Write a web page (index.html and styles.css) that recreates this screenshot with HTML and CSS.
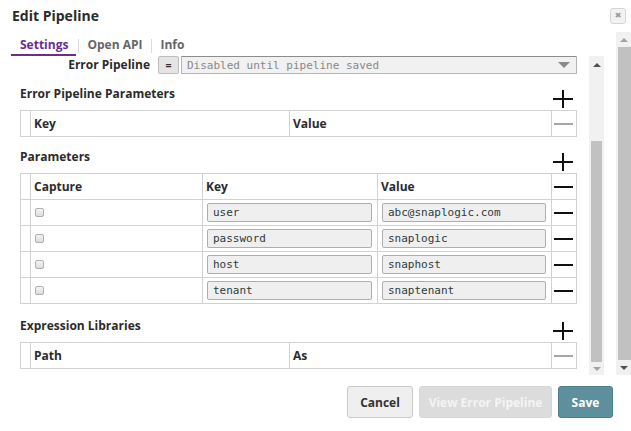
FILE: index.html
```html
<!DOCTYPE html>
<html lang="en">
<head>
<meta charset="utf-8">
<title>Edit Pipeline</title>
<link rel="stylesheet" href="styles.css">
</head>
<body>
<div class="dialog">
  <header class="dlg-head">
    <h1 class="dlg-title">Edit Pipeline</h1>
    <button class="dlg-close" type="button" aria-label="Close">&#x2716;</button>
  </header>

  <div class="dlg-main">
    <div class="dlg-left">
      <nav class="tabs">
        <span class="tab active">Settings</span>
        <span class="tab-sep"></span>
        <span class="tab">Open API</span>
        <span class="tab-sep"></span>
        <span class="tab">Info</span>
      </nav>

      <div class="pane">
        <div class="pane-content">
          <div class="field-row">
            <label class="field-label">Error Pipeline</label>
            <button class="expr-btn" type="button">=</button>
            <div class="select">
              <span class="select-text">Disabled until pipeline saved</span>
              <span class="select-caret"></span>
            </div>
          </div>

          <section class="group">
            <div class="group-head">
              <h2 class="group-title">Error Pipeline Parameters</h2>
              <svg class="icon-plus" width="20" height="18" viewBox="0 0 20 18"><path d="M10 0v18M0 9h20" stroke="#111" stroke-width="2" fill="none"/></svg>
            </div>
            <table class="grid">
              <colgroup><col class="c-idx"><col style="width:259px"><col style="width:262px"><col class="c-act"></colgroup>
              <tr class="head">
                <th></th><th>Key</th><th>Value</th>
                <th class="act"><span class="minus off"></span></th>
              </tr>
            </table>
          </section>

          <section class="group">
            <div class="group-head">
              <h2 class="group-title">Parameters</h2>
              <svg class="icon-plus" width="20" height="18" viewBox="0 0 20 18"><path d="M10 0v18M0 9h20" stroke="#111" stroke-width="2" fill="none"/></svg>
            </div>
            <table class="grid">
              <colgroup><col class="c-idx"><col style="width:172px"><col style="width:175px"><col style="width:174px"><col class="c-act"></colgroup>
              <tr class="head">
                <th></th><th>Capture</th><th>Key</th><th>Value</th>
                <th class="act"><span class="minus"></span></th>
              </tr>
              <tr>
                <td></td><td><span class="check"></span></td>
                <td class="in"><span class="input">user</span></td>
                <td class="in"><span class="input">abc@snaplogic.com</span></td>
                <td class="act"><span class="minus"></span></td>
              </tr>
              <tr>
                <td></td><td><span class="check"></span></td>
                <td class="in"><span class="input">password</span></td>
                <td class="in"><span class="input">snaplogic</span></td>
                <td class="act"><span class="minus"></span></td>
              </tr>
              <tr>
                <td></td><td><span class="check"></span></td>
                <td class="in"><span class="input">host</span></td>
                <td class="in"><span class="input">snaphost</span></td>
                <td class="act"><span class="minus"></span></td>
              </tr>
              <tr>
                <td></td><td><span class="check"></span></td>
                <td class="in"><span class="input">tenant</span></td>
                <td class="in"><span class="input">snaptenant</span></td>
                <td class="act"><span class="minus"></span></td>
              </tr>
            </table>
          </section>

          <section class="group">
            <div class="group-head">
              <h2 class="group-title">Expression Libraries</h2>
              <svg class="icon-plus" width="20" height="18" viewBox="0 0 20 18"><path d="M10 0v18M0 9h20" stroke="#111" stroke-width="2" fill="none"/></svg>
            </div>
            <table class="grid">
              <colgroup><col class="c-idx"><col style="width:259px"><col style="width:262px"><col class="c-act"></colgroup>
              <tr class="head">
                <th></th><th>Path</th><th>As</th>
                <th class="act"><span class="minus off"></span></th>
              </tr>
            </table>
          </section>
        </div>

        <div class="vscroll inner">
          <div class="sb-btn up-btn"><span class="arrow up"></span></div>
          <div class="sb-gap"></div>
          <div class="sb-thumb"></div>
          <div class="sb-btn down-btn"><span class="arrow down dim"></span></div>
        </div>
      </div>
    </div>

    <div class="vscroll outer">
      <div class="sb-btn up-btn"><span class="arrow up dim"></span></div>
      <div class="sb-thumb"></div>
      <div class="sb-btn down-btn"><span class="arrow down"></span></div>
    </div>
  </div>

  <footer class="dlg-foot">
    <button class="btn btn-cancel" type="button">Cancel</button>
    <button class="btn btn-disabled" type="button">View Error Pipeline</button>
    <button class="btn btn-save" type="button">Save</button>
  </footer>
</div>
</body>
</html>
```

FILE: styles.css
```css
* { box-sizing: border-box; }

html, body {
  margin: 0;
  padding: 0;
  background: #fff;
}

body {
  font-family: "Open Sans", "Noto Sans", sans-serif;
  color: #333;
}

.dialog {
  width: 631px;
  height: 431px;
  display: flex;
  flex-direction: column;
  overflow: hidden;
}

/* ---- header ---- */
.dlg-head {
  height: 32px;
  flex: none;
  display: flex;
  align-items: center;
  justify-content: space-between;
  padding: 0 5px 0 12px;
}

.dlg-title {
  margin: 0;
  font-size: 14px;
  font-weight: 700;
  line-height: 32px;
  color: #2b2b2b;
}

.dlg-close {
  width: 16px;
  height: 16px;
  padding: 0;
  border: 1px solid #d6d6d6;
  border-radius: 3px;
  background: #f2f2f2;
  color: #9a9a9a;
  font-size: 8px;
  line-height: 14px;
  text-align: center;
  font-family: "DejaVu Sans", sans-serif;
}

/* ---- main area ---- */
.dlg-main {
  height: 343px;
  flex: none;
  display: flex;
}

.dlg-left {
  margin-left: 11px;
  width: 593px;
  display: flex;
  flex-direction: column;
}

.tabs {
  height: 24px;
  flex: none;
  display: flex;
  align-items: flex-end;
}

.tab {
  font-size: 12px;
  font-weight: 700;
  line-height: 16px;
  padding: 0 7px 1px 8px;
  border-bottom: 2px solid transparent;
  color: #666;
}

.tab.active {
  padding: 0 8px 1px 9px;
  color: #6a2d8f;
  border-bottom-color: #6a2d8f;
}

.tab-sep {
  width: 1px;
  height: 14px;
  background: #dadada;
  margin: 0 0 3px 2px;
}

.pane {
  flex: 1;
  display: flex;
  min-height: 0;
}

.pane-content {
  width: 578px;
  padding: 0 13px 0 9px;
  overflow: hidden;
}

/* ---- error pipeline row ---- */
.field-row {
  display: flex;
  align-items: stretch;
  height: 18px;
}

.field-label {
  width: 138px;
  padding-right: 8px;
  text-align: right;
  font-size: 12px;
  font-weight: 700;
  line-height: 17px;
  color: #2b2b2b;
}

.expr-btn {
  width: 21px;
  height: 18px;
  padding: 0;
  margin-right: 2px;
  border: 1px solid #bdbdbd;
  border-radius: 2px;
  background: #e4e4e4;
  font-family: "DejaVu Sans Mono", monospace;
  font-size: 10px;
  font-weight: 700;
  color: #333;
}

.select {
  flex: 1;
  margin-right: -1px;
  display: flex;
  align-items: center;
  justify-content: space-between;
  border: 1px solid #b5b5b5;
  border-top-color: #8c8c8c;
  border-radius: 1px;
  background: #f1f1f1;
  padding: 0 6px 0 5px;
}

.select-text {
  font-family: "DejaVu Sans Mono", monospace;
  font-size: 11px;
  color: #888;
}

.select-caret {
  width: 0;
  height: 0;
  border-left: 6px solid transparent;
  border-right: 6px solid transparent;
  border-top: 6px solid #8a8a8a;
}

/* ---- grouped tables ---- */
.group {
  margin-top: 10px;
}

.group:last-child {
  margin-top: 12px;
}

.group-head {
  height: 26px;
  display: flex;
  justify-content: space-between;
  align-items: flex-start;
}

.group-title {
  margin: 0;
  font-size: 12px;
  font-weight: 700;
  line-height: 20px;
  color: #2b2b2b;
}

.icon-plus {
  display: block;
  margin: 6px 3px 0 0;
}

.grid {
  width: 556px;
  table-layout: fixed;
  border-collapse: collapse;
}

.c-idx { width: 10px; }
.c-act { width: 25px; }

.grid th,
.grid td {
  border: 1px solid #d2d2d2;
  height: 26px;
  padding: 0 0 0 3px;
  text-align: left;
  vertical-align: middle;
}

.grid th {
  font-size: 12px;
  font-weight: 700;
  color: #2b2b2b;
}

.grid td.in {
  padding: 0 5px 0 4px;
}

.grid .act {
  padding: 0 0 0 2px;
}

.input {
  display: block;
  height: 19px;
  border: 1px solid #aeaeae;
  border-radius: 2px;
  background: #efefef;
  padding: 0 0 0 5px;
  font-family: "DejaVu Sans Mono", monospace;
  font-size: 11px;
  line-height: 17px;
  color: #2d3b3b;
}

.check {
  display: block;
  margin-left: 1px;
  width: 9px;
  height: 9px;
  border: 1px solid #b0b0b0;
  border-radius: 2px;
  background: linear-gradient(#f4f4f4, #dcdcdc);
}

.minus {
  display: block;
  width: 19px;
  height: 2px;
  background: #111;
  margin-top: 1px;
}

.minus.off {
  background: #a6a6a6;
}

/* ---- scrollbars ---- */
.vscroll {
  display: flex;
  flex-direction: column;
  background: #f1f1f1;
  flex: none;
}

.vscroll.inner {
  width: 15px;
}

.vscroll.outer {
  width: 15px;
  margin-left: 12px;
}

.sb-btn {
  display: flex;
  justify-content: center;
  align-items: center;
  flex: none;
}

.inner .up-btn { height: 17px; }
.inner .sb-gap { height: 68px; flex: none; }
.inner .sb-thumb { height: 221px; margin: 0 2px; }
.inner .down-btn { height: 13px; }

.outer .up-btn { height: 15px; }
.outer .sb-thumb { height: 313px; margin-left: 2px; }
.outer .down-btn { height: 15px; }

.sb-thumb {
  flex: none;
  background: #c1c1c1;
}

.arrow {
  width: 0;
  height: 0;
  border-left: 4px solid transparent;
  border-right: 4px solid transparent;
}

.arrow.up { border-bottom: 4px solid #505050; }
.arrow.down { border-top: 4px solid #505050; }
.arrow.up.dim { border-bottom-color: #a3a3a3; }
.arrow.down.dim { border-top-color: #a3a3a3; }

/* ---- footer ---- */
.dlg-foot {
  flex: 1;
  display: flex;
  justify-content: flex-end;
  align-items: flex-start;
  gap: 6px;
  padding: 11px 18px 0 0;
}

.btn {
  height: 32px;
  border-radius: 3px;
  font-family: "Open Sans", "Noto Sans", sans-serif;
  font-size: 12px;
  font-weight: 700;
  padding: 0;
}

.btn-cancel {
  width: 66px;
  background: #efefef;
  border: 1px solid #c9c9c9;
  color: #333;
}

.btn-disabled {
  width: 133px;
  background: #dcdcdc;
  border: 1px solid #d6d6d6;
  color: #f4f4f4;
}

.btn-save {
  width: 55px;
  background: #5d8f9c;
  border: 1px solid #4f7f8c;
  color: #fff;
}
```
